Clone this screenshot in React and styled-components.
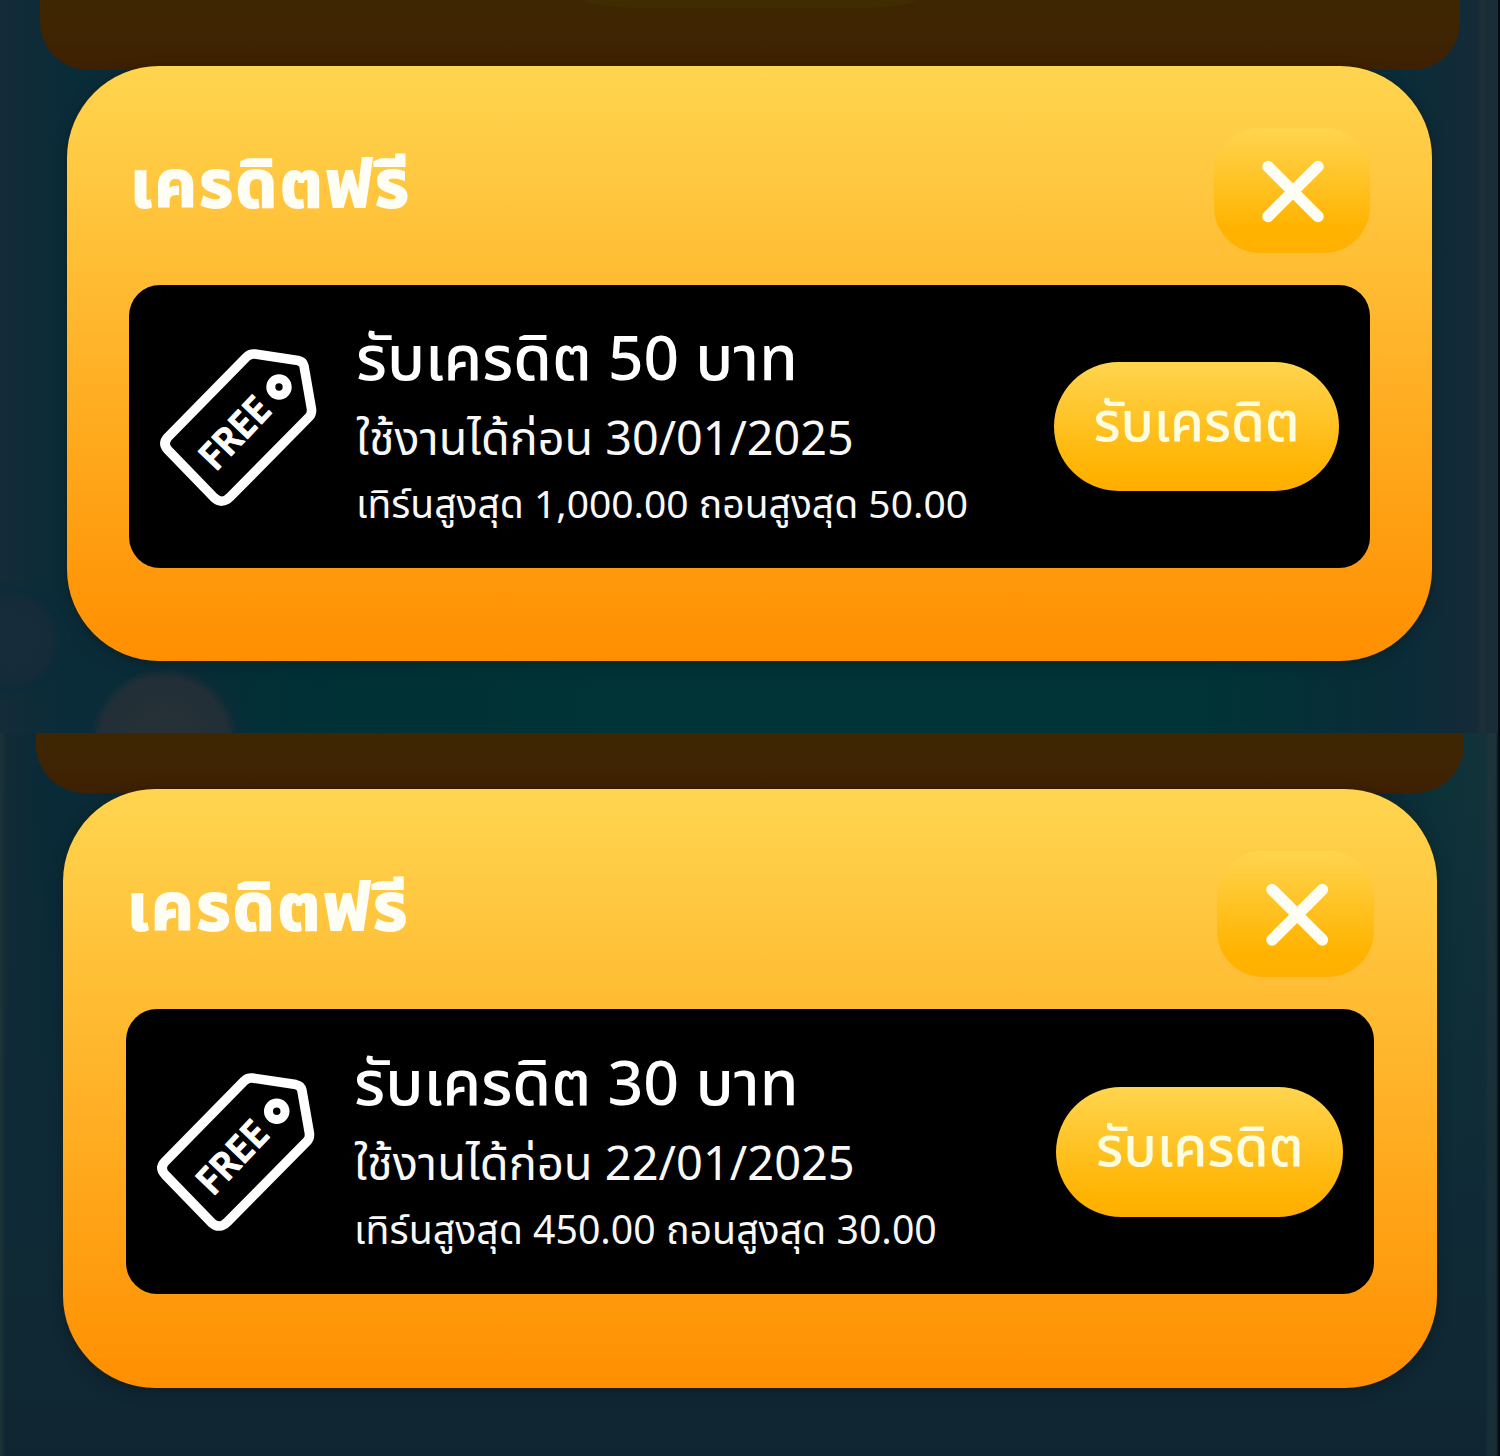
import React from "react";
import styled, { createGlobalStyle, css } from "styled-components";

const GlobalStyle = createGlobalStyle`
	* {
		box-sizing: border-box;
	}

	body {
		margin: 0;
		background: #0b2a36;
		font-family: "Noto Sans", "Noto Sans Thai", "Open Sans", sans-serif;
	}
`;

// sizes follow the zoom of the screen they are in
const u = (n) => `calc(${n}px * var(--zoom))`;

const tealScene = css`
	padding-right: 1px;
	background:
		linear-gradient(90deg, transparent 1479px, #26303680 1480px, #26303680 1485px, transparent 1487px, transparent 1498px, #05090c 1498px),
		radial-gradient(circle at 164px 742px, #273036 0, #222f37 64px, #0a2c38 74px, #0d2b3800 84px),
		radial-gradient(circle at 10px 640px, #162c39 0, #152b39 42px, #0c2b3a 50px, #0c2b3a00 62px),
		linear-gradient(90deg, #152b38 0, #0a2c38 60px, #0a2c38 150px, #003135 330px, #003436 620px, #003436 1200px, #0a2c38 1400px, #142a38 1470px, #1b2d36 1500px);
`;

const nightScene = css`
	background:
		linear-gradient(90deg, #1c3336 0, #1c333600 6px, transparent 1485px, #24353c80 1489px, #20333980 1496px, #05090c 1499px),
		linear-gradient(180deg, #0b2c3800 0, #0f2a36 500px, #0f2632 723px),
		linear-gradient(90deg, #132b36 0, #082a38 50px, #0b2a36 120px, #0b2a36 1380px, #0b3338 1440px, #15323a 1500px);
`;

const Screen = styled.section`
	--zoom: ${(props) => props.$zoom};
	height: ${(props) => props.$height}px;
	display: flex;
	flex-direction: column;
	align-items: center;
	overflow: hidden;
	${(props) => (props.$night ? nightScene : tealScene)}
`;

const DimmedPanel = styled.div`
	flex: none;
	display: flex;
	justify-content: center;
	width: ${u(1420)};
	height: ${(props) => props.$height}px;
	border-radius: 0 0 ${u(48)} ${u(48)};
	background: linear-gradient(180deg, #3f2603 0, #3e2402 60%, #3e2003 100%);
`;

// bottom edge of the green button in the panel behind
const DimmedButton = styled.div`
	width: 330px;
	height: 8px;
	border-radius: 0 0 60px 60px / 0 0 8px 8px;
	background: #402c01;
`;

const Card = styled.div`
	flex: none;
	display: flex;
	flex-direction: column;
	width: ${u(1365)};
	height: ${u(595)};
	margin-top: -4px;
	padding: ${u(62)} ${u(62)} 0;
	border-radius: ${u(92)};
	background: linear-gradient(180deg, #ffd54f 0%, #ff8f00 100%);
	box-shadow: 0 4px 16px rgba(0, 0, 0, 0.22), 0 0 3px rgba(60, 35, 0, 0.6);
`;

const CardHeader = styled.header`
	display: flex;
	justify-content: space-between;
	align-items: flex-start;
	height: ${u(157)};
`;

const Title = styled.h2`
	margin: ${u(8)} 0 0 ${u(1)};
	font-size: ${u(66)};
	line-height: ${u(90)};
	font-weight: 700;
	letter-spacing: ${u(2.3)};
	-webkit-text-stroke: 1.8px #fffef5;
	color: #fffef5;
	white-space: nowrap;
`;

const CloseButton = styled.button`
	display: flex;
	align-items: center;
	justify-content: center;
	width: ${u(156)};
	height: ${u(125)};
	padding: 0 0 0 2px;
	border: 0;
	border-radius: ${u(46)};
	background: linear-gradient(180deg, #ffd54f 0%, #ffb300 80%, #ffb000 100%);
	cursor: pointer;

	svg {
		width: ${u(64)};
		height: ${u(64)};
	}
`;

const Ticket = styled.div`
	display: flex;
	align-items: center;
	height: ${u(283)};
	padding: 0 ${u(31)};
	border-radius: ${u(31)};
	background: #000;
	color: #fff;
`;

const TagIcon = styled.svg`
	flex: none;
	width: ${u(158)};
	height: ${u(160)};
	overflow: visible;
`;

const TicketInfo = styled.div`
	flex: 1;
	display: flex;
	flex-direction: column;
	padding: 0 0 ${u(8)} ${u(38)};
	white-space: nowrap;
`;

const Amount = styled.div`
	font-size: ${u(62.2)};
	line-height: ${u(88)};
	font-weight: 500;
`;

const Expiry = styled.div`
	padding-top: ${u(2)};
	font-size: ${u(46.7)};
	line-height: ${u(71)};
	color: #f8f8f8;
`;

const Limits = styled.div`
	font-size: ${u(39)};
	line-height: ${u(60)};
	color: #f8f8f8;
`;

const ClaimButton = styled.button`
	flex: none;
	width: ${u(285)};
	height: ${u(129)};
	padding: 0 0 ${u(13)};
	border: 0;
	border-radius: ${u(65)};
	background: linear-gradient(180deg, #ffd54f 0%, #ffb300 85%, #ffae00 100%);
	color: #fffde0;
	font-family: inherit;
	font-size: ${u(54.4)};
	font-weight: 500;
	line-height: ${u(80)};
	white-space: nowrap;
	cursor: pointer;
`;

function FreeTag() {
	return (
		<TagIcon viewBox="0 0 158 160" fill="none" stroke="#fff" strokeLinejoin="round">
			<path
				d="M86.500 10Q90 6.500 95 7L138 13.500Q143 14.500 144 19L151.500 62Q152 67 149 70L70 150Q62 158 54 150.500L8 103Q2 96.500 8 90Z"
				strokeWidth="9.500"
			/>
			<circle cx="119" cy="40" r="8.200" strokeWidth="9" />
			<text
				transform="translate(55.500 125.500) rotate(-46.500)"
				fill="#fff"
				stroke="#fff"
				strokeWidth="1"
				fontFamily="Noto Sans, sans-serif"
				fontWeight="600"
				fontSize="38"
				textLength="84"
				lengthAdjust="spacingAndGlyphs"
			>
				FREE
			</text>
		</TagIcon>
	);
}

function CreditCard({ amount, expires, turnover, withdraw }) {
	return (
		<Card>
			<CardHeader>
				<Title>เครดิตฟรี</Title>
				<CloseButton aria-label="ปิด">
					<svg viewBox="0 0 64 64" fill="none" stroke="#fffef5" strokeWidth="11.500" strokeLinecap="round">
						<path d="M7 7.500L57 57.500M57 7.500L7 57.500" />
					</svg>
				</CloseButton>
			</CardHeader>
			<Ticket>
				<FreeTag />
				<TicketInfo>
					<Amount>รับเครดิต {amount} บาท</Amount>
					<Expiry>ใช้งานได้ก่อน {expires}</Expiry>
					<Limits>
						เทิร์นสูงสุด {turnover} ถอนสูงสุด {withdraw}
					</Limits>
				</TicketInfo>
				<ClaimButton>รับเครดิต</ClaimButton>
			</Ticket>
		</Card>
	);
}

export default function App() {
	return (
		<>
			<GlobalStyle />
			<Screen $zoom={1} $height={733}>
				<DimmedPanel $height={70}>
					<DimmedButton />
				</DimmedPanel>
				<CreditCard amount="50" expires="30/01/2025" turnover="1,000.00" withdraw="50.00" />
			</Screen>
			<Screen $zoom={1.0062} $height={723} $night>
				<DimmedPanel $height={60} />
				<CreditCard amount="30" expires="22/01/2025" turnover="450.00" withdraw="30.00" />
			</Screen>
		</>
	);
}
